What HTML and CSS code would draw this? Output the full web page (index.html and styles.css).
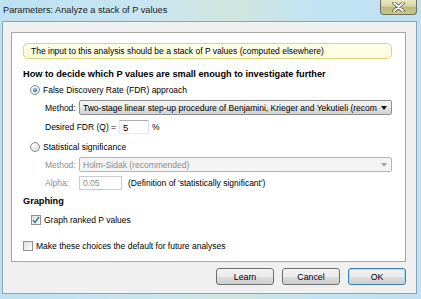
FILE: index.html
```html
<!DOCTYPE html>
<html>
<head>
    <title>Parameters: Analyze a stack of P values</title>

    <!--CSS File-->
    <link rel="stylesheet" href="styles.css">
</head>
<body>
    <div class="titlebar">
        <span class="title">Parameters: Analyze a stack of P values</span>
        <div class="close-btn">
            <svg width="13" height="10" viewBox="0 0 13 10">
                <path d="M2 1 L11 9 M11 1 L2 9" stroke="#55553f" stroke-width="3.4" stroke-linecap="round"/>
                <path d="M2 1 L11 9 M11 1 L2 9" stroke="#ffffff" stroke-width="1.8" stroke-linecap="round"/>
            </svg>
        </div>
    </div>

    <div class="dialog">
        <div class="panel">
            <div class="note">The input to this analysis should be a stack of P values (computed elsewhere)</div>

            <div class="heading">How to decide which P values are small enough to investigate further</div>

            <div class="option-row">
                <span class="radio checked"></span>
                <span>False Discovery Rate (FDR) approach</span>
            </div>
            <div class="field-row method-row">
                <span class="field-label">Method:</span>
                <div class="select">
                    <span class="select-text">Two-stage linear step-up procedure of Benjamini, Krieger and Yekutieli (recommended)</span>
                    <span class="arrow"></span>
                </div>
            </div>
            <div class="field-row fdr-row">
                <span>Desired FDR (Q) =</span>
                <div class="textbox fdr-box">5</div>
                <span>%</span>
            </div>

            <div class="option-row stat-row">
                <span class="radio"></span>
                <span>Statistical significance</span>
            </div>
            <div class="field-row method-row disabled">
                <span class="field-label">Method:</span>
                <div class="select">
                    <span class="select-text">Holm-Sidak (recommended)</span>
                    <span class="arrow"></span>
                </div>
            </div>
            <div class="field-row alpha-row">
                <span class="field-label disabled">Alpha:</span>
                <div class="textbox alpha-box">0.05</div>
                <span>(Definition of 'statistically significant')</span>
            </div>

            <div class="heading graphing">Graphing</div>

            <div class="check-row graph-row">
                <span class="checkbox checked">
                    <svg width="8" height="8" viewBox="0 0 8 8">
                        <path d="M1 4.2 L3 6.5 L7 1" fill="none" stroke="#3f7fae" stroke-width="1.6"/>
                    </svg>
                </span>
                <span>Graph ranked P values</span>
            </div>

            <div class="check-row default-row">
                <span class="checkbox"></span>
                <span>Make these choices the default for future analyses</span>
            </div>
        </div>

        <div class="buttons">
            <button class="win-button">Learn</button>
            <button class="win-button">Cancel</button>
            <button class="win-button default">OK</button>
        </div>
    </div>
</body>
</html>
```

FILE: styles.css
```css
body, html {
    margin: 0;
    padding: 0;
}

body {
    width: 421px;
    height: 299px;
    overflow: hidden;
    background: linear-gradient(90deg, #bde1f2, #c8e5ef 35%, #cfe6df 55%, #c2e3f2 75%, #bfe1f3);
    font-family: "Liberation Sans", Arial, sans-serif;
    font-size: 8.5px;
    color: #000;
}

/* window caption */
.titlebar {
    height: 21px;
    display: flex;
    justify-content: space-between;
    align-items: flex-start;
}

.title {
    padding: 5px 0 0 3px;
    font-size: 9.2px;
    color: #1a1a1a;
}

.close-btn {
    box-sizing: border-box;
    width: 37px;
    height: 15px;
    margin-right: 4px;
    border: 1px solid #6f6f5c;
    border-top: none;
    border-radius: 0 0 4px 4px;
    background: linear-gradient(#ebe8c4, #d7d4a3 45%, #bdb97d 50%, #cbc78d);
    display: flex;
    align-items: center;
    justify-content: center;
}

/* client area */
.dialog {
    box-sizing: border-box;
    height: 273px;
    margin: 0 4px 0 2px;
    padding: 10px 10px 0 8px;
    background: #f0f0f0;
    border: 1px solid #8ea3ad;
}

.panel {
    background: #fff;
    border: 1px solid #a7a7a7;
    padding: 10px 13px 8px 11px;
}

.note {
    box-sizing: border-box;
    height: 16px;
    padding-left: 7px;
    display: flex;
    align-items: center;
    border: 1px solid #d9d57e;
    border-radius: 5px;
    background: linear-gradient(#ffffee, #fdfbd8);
}

.heading {
    height: 14px;
    margin-top: 8px;
    display: flex;
    align-items: center;
    font-weight: bold;
    font-size: 9.2px;
}

.option-row {
    height: 14px;
    margin-top: 2px;
    padding-left: 7px;
    display: flex;
    align-items: center;
    gap: 3px;
}

.stat-row {
    margin-top: 6px;
}

.radio {
    box-sizing: border-box;
    width: 10px;
    height: 10px;
    border: 1px solid #8b8d8f;
    border-radius: 50%;
    background: radial-gradient(circle at 40% 35%, #ffffff, #e3e3e3 70%, #cfcfcf);
    display: flex;
    align-items: center;
    justify-content: center;
}

.radio.checked:after {
    content: "";
    width: 4px;
    height: 4px;
    border-radius: 50%;
    background: radial-gradient(circle at 40% 35%, #9cd4f4, #2f7cb6 60%, #1c4e83);
}

.field-row {
    padding-left: 22px;
    display: flex;
    align-items: center;
    gap: 3px;
}

.field-label {
    width: 31px;
}

.method-row {
    height: 15px;
    margin-top: 3px;
}

.select {
    box-sizing: border-box;
    flex: 1;
    min-width: 0;
    height: 15px;
    border: 1px solid #8e8f8f;
    border-radius: 2px;
    background: linear-gradient(#f3f3f3, #ebebeb 50%, #dedede 51%, #d4d4d4);
    display: flex;
    align-items: center;
    padding: 0 4px 0 3px;
    overflow: hidden;
}

.select-text {
    flex: 1;
    min-width: 0;
    white-space: nowrap;
    overflow: hidden;
    text-overflow: clip;
}

.arrow {
    flex: none;
    width: 0;
    height: 0;
    margin-left: 4px;
    border-left: 3.5px solid transparent;
    border-right: 3.5px solid transparent;
    border-top: 4px solid #111;
}

.disabled .field-label,
.field-label.disabled {
    color: #8d8d8d;
}

.disabled .select {
    background: #f4f4f4;
    border-color: #b5b5b5;
    color: #8d8d8d;
}

.disabled .arrow {
    border-top-color: #a6a6a6;
}

.textbox {
    box-sizing: border-box;
    height: 14px;
    border: 1px solid #abadb3;
    border-color: #abadb3 #dbdfe6 #e3e9ef #e2e3ea;
    background: #fff;
    padding-left: 3px;
    display: flex;
    align-items: center;
}

.fdr-row {
    height: 14px;
    margin-top: 5px;
}

.fdr-box {
    width: 30px;
    font-size: 9.5px;
}

.alpha-row {
    height: 14px;
    margin-top: 4px;
}

.alpha-box {
    width: 43px;
    margin-right: 3px;
    color: #8d8d8d;
    border-color: #c9cbcf;
}

.graphing {
    margin-top: 4px;
}

.check-row {
    height: 15px;
    display: flex;
    align-items: center;
    gap: 3px;
}

.graph-row {
    margin-top: 4px;
    padding-left: 8px;
}

.default-row {
    margin-top: 11px;
}

.checkbox {
    box-sizing: border-box;
    width: 10px;
    height: 10px;
    border: 1px solid #8e8f8f;
    background: linear-gradient(135deg, #dcdcdc, #f6f6f6 70%, #ffffff);
    display: flex;
    align-items: center;
    justify-content: center;
}

/* bottom buttons */
.buttons {
    margin-top: 6px;
    display: flex;
    justify-content: flex-end;
    gap: 8px;
}

.win-button {
    box-sizing: border-box;
    width: 58px;
    height: 17px;
    padding: 0;
    border: 1px solid #707070;
    border-radius: 3px;
    background: linear-gradient(#f2f2f2, #ebebeb 50%, #dddddd 51%, #cfcfcf);
    font-family: "Liberation Sans", Arial, sans-serif;
    font-size: 8.8px;
    color: #000;
}

.win-button.default {
    border-color: #3c7fb1;
    box-shadow: inset 0 0 0 1px #a6e0f8;
}
```
